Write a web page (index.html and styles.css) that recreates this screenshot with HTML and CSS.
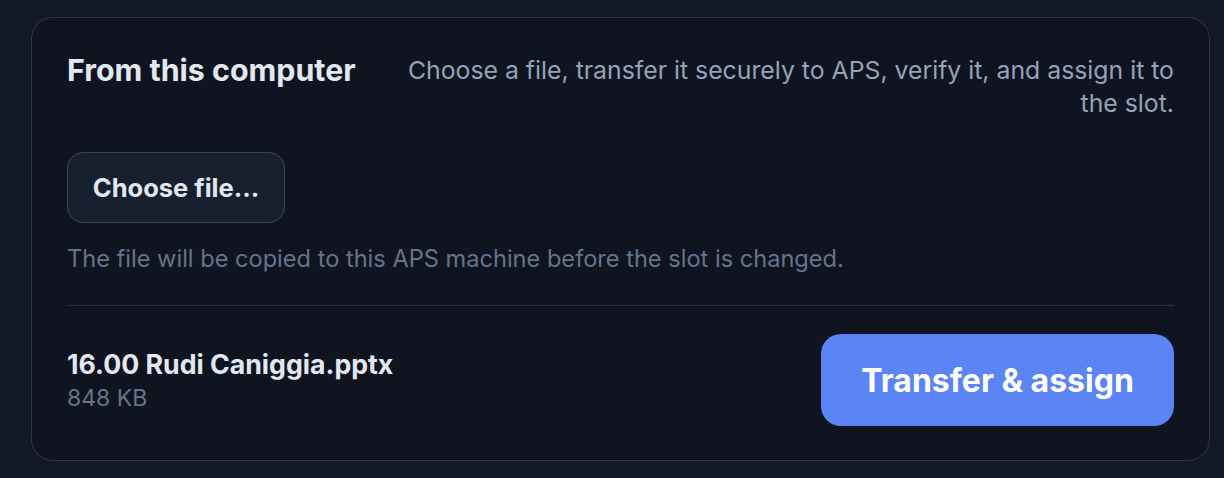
FILE: index.html
```html
<!DOCTYPE html>
<html lang="en">
<head>
<meta charset="utf-8">
<link rel="stylesheet" href="styles.css">
</head>
<body>
<section class="card">
  <header class="card-head">
    <h2 class="title">From this computer</h2>
    <p class="desc">Choose a file, transfer it securely to APS, verify it, and assign it to the slot.</p>
  </header>
  <button class="choose" type="button">Choose file...</button>
  <p class="hint">The file will be copied to this APS machine before the slot is changed.</p>
  <hr class="divider">
  <div class="file-row">
    <div class="file-info">
      <div class="file-name">16.00 Rudi Caniggia.pptx</div>
      <div class="file-size">848 KB</div>
    </div>
    <button class="primary" type="button">Transfer &amp; assign</button>
  </div>
</section>
</body>
</html>
```

FILE: styles.css
```css
html, body {
  background: #131826;
}
body {
  margin: 17px 14px 17px 31px;
  font-family: Inter, "Noto Sans", sans-serif;
}
.card {
  border: 1px solid #2e384a;
  border-radius: 22px;
  background: #0f1420;
  padding: 34px 35px;
  display: flex;
  flex-direction: column;
}
.card-head {
  display: flex;
  justify-content: space-between;
  align-items: flex-start;
  gap: 30px;
}
.title {
  margin: 0;
  font-size: 30.4px;
  line-height: 36px;
  font-weight: 700;
  color: #e2e8f0;
  white-space: nowrap;
}
.desc {
  margin: 2px 0 0;
  max-width: 785px;
  text-align: right;
  font-size: 24.8px;
  line-height: 33px;
  color: #94a3b8;
}
.choose {
  align-self: flex-start;
  margin-top: 32px;
  width: 218px;
  height: 71px;
  border: 1px solid #3a4559;
  border-radius: 16px;
  background: #182030;
  color: #e2e8f0;
  font-family: inherit;
  font-size: 25.5px;
  font-weight: 700;
}
.hint {
  margin: 21px 0 0;
  font-size: 23.6px;
  line-height: 30px;
  color: #64748b;
}
.divider {
  margin: 31px 0 0;
  border: 0;
  height: 1px;
  background: #283142;
}
.file-row {
  margin-top: 28px;
  display: flex;
  justify-content: space-between;
  align-items: center;
}
.file-name {
  font-size: 26.7px;
  line-height: 32px;
  font-weight: 700;
  color: #e2e8f0;
}
.file-size {
  margin-top: 3px;
  font-size: 23px;
  line-height: 30px;
  color: #64748b;
}
.primary {
  width: 353px;
  height: 92px;
  border: 0;
  border-radius: 20px;
  background: #5b85f5;
  color: #ffffff;
  font-family: inherit;
  font-size: 32px;
  font-weight: 700;
}
```
